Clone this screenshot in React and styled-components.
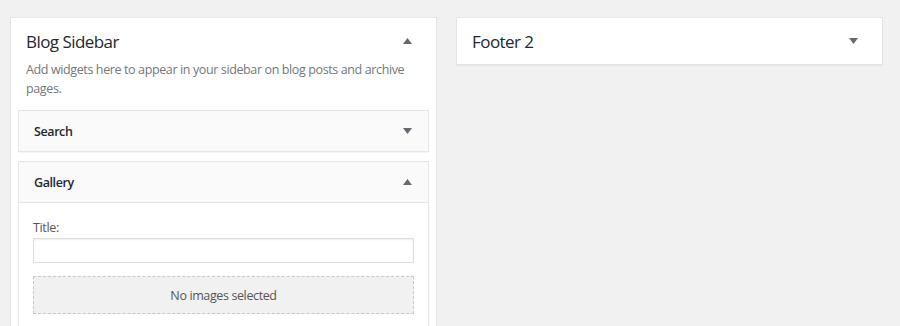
import React from "react";
import styled, { createGlobalStyle } from "styled-components";

const Global = createGlobalStyle`
  html, body { margin: 0; padding: 0; background: #f1f1f1; }
  body { font-family: "Open Sans", "Noto Sans", sans-serif; color: #444; }
  * { box-sizing: border-box; }
`;

const Page = styled.div`
  display: grid;
  grid-template-columns: 427px 427px;
  column-gap: 19px;
  align-items: start;
  padding: 17px 0 0 10px;
  height: 326px;
  overflow: hidden;
`;

const Panel = styled.section`
  background: #fff;
  border: 1px solid #e5e5e5;
  box-shadow: 0 1px 1px rgba(0, 0, 0, 0.04);
  padding-bottom: ${(p) => (p.$open ? "20px" : "0")};
`;

const PanelHead = styled.div`
  display: flex;
  align-items: center;
  justify-content: space-between;
  height: 46px;
  padding: 0 24px 0 15px;
`;

const PanelTitle = styled.h2`
  margin: 0;
  font-size: 17px;
  font-weight: 400;
  color: #23282d;
  letter-spacing: -0.55px;
`;

const Description = styled.p`
  margin: -4px 0 0;
  padding: 0 15px;
  font-size: 12.5px;
  line-height: 19px;
  letter-spacing: -0.38px;
  color: #72777c;
`;

const WidgetList = styled.div`
  display: flex;
  flex-direction: column;
  gap: 9px;
  padding: 12px 7px 0;
`;

const Widget = styled.div`
  border: 1px solid #e5e5e5;
  background: #fff;
  box-shadow: 0 1px 1px rgba(0, 0, 0, 0.04);
`;

const WidgetHead = styled.div`
  display: flex;
  align-items: center;
  justify-content: space-between;
  height: ${(p) => (p.$open ? "41px" : "40px")};
  padding: 0 16px 0 15px;
  background: #fafafa;
  border-bottom: ${(p) => (p.$open ? "1px solid #e5e5e5" : "none")};
`;

const WidgetTitle = styled.h3`
  margin: 0;
  font-size: 12.5px;
  font-weight: 600;
  letter-spacing: -0.4px;
  color: #23282d;
`;

const WidgetBody = styled.div`
  padding: 16px 14px 30px;
`;

const Label = styled.label`
  display: block;
  font-size: 12.5px;
  letter-spacing: -0.35px;
  color: #555;
  line-height: 18px;
  margin-bottom: 1px;
`;

const Input = styled.input`
  display: block;
  width: 100%;
  height: 25px;
  border: 1px solid #ddd;
  box-shadow: inset 0 1px 2px rgba(0, 0, 0, 0.07);
  background: #fff;
  margin: 0 0 13px;
`;

const Gallery = styled.div`
  display: flex;
  align-items: center;
  justify-content: center;
  height: 38px;
  border: 1px dashed #c9c9c9;
  background: #f1f1f1;
  font-size: 12.5px;
  letter-spacing: -0.38px;
  color: #555;
`;

const Arrow = ({ up }) => (
  <svg width="9" height="6" viewBox="0 0 9 6" aria-hidden="true">
    <path d={up ? "M0 6 L4.5 0 L9 6 Z" : "M0 0 L9 0 L4.5 6 Z"} fill="#646970" />
  </svg>
);

export default function App() {
  return (
    <>
      <Global />
      <Page>
        <Panel $open>
          <PanelHead>
            <PanelTitle>Blog Sidebar</PanelTitle>
            <Arrow up />
          </PanelHead>
          <Description>
            Add widgets here to appear in your sidebar on blog posts and archive pages.
          </Description>
          <WidgetList>
            <Widget>
              <WidgetHead>
                <WidgetTitle>Search</WidgetTitle>
                <Arrow />
              </WidgetHead>
            </Widget>
            <Widget>
              <WidgetHead $open>
                <WidgetTitle>Gallery</WidgetTitle>
                <Arrow up />
              </WidgetHead>
              <WidgetBody>
                <Label>Title:</Label>
                <Input type="text" />
                <Gallery>No images selected</Gallery>
              </WidgetBody>
            </Widget>
          </WidgetList>
        </Panel>
        <Panel>
          <PanelHead>
            <PanelTitle>Footer 2</PanelTitle>
            <Arrow />
          </PanelHead>
        </Panel>
      </Page>
    </>
  );
}
